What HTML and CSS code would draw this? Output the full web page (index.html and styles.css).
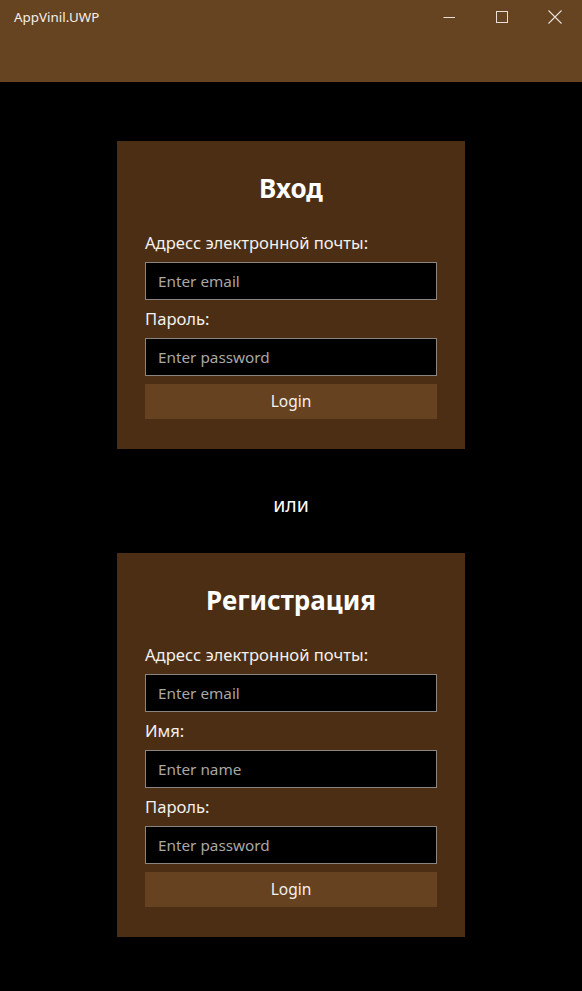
FILE: index.html
```html
<!DOCTYPE html>
<html lang="ru">
<head>
<meta charset="utf-8">
<title>AppVinil.UWP</title>
<link rel="stylesheet" href="styles.css">
</head>
<body>
<header class="titlebar">
  <div class="app-title">AppVinil.UWP</div>
  <div class="caption-buttons">
    <div class="cap-btn">
      <svg width="12" height="12" viewBox="0 0 12 12"><path d="M0.5 6.5h12" stroke="#e8e0d8" stroke-width="1" fill="none"/></svg>
    </div>
    <div class="cap-btn">
      <svg width="12" height="12" viewBox="0 0 12 12"><rect x="0.5" y="0.5" width="11" height="11" stroke="#e8e0d8" stroke-width="1" fill="none"/></svg>
    </div>
    <div class="cap-btn">
      <svg width="14" height="14" viewBox="0 0 14 14"><path d="M0.5 0.5L13.5 13.5M13.5 0.5L0.5 13.5" stroke="#e8e0d8" stroke-width="1.1" fill="none"/></svg>
    </div>
  </div>
</header>
<main class="content">
  <section class="card">
    <h1 class="card-title">Вход</h1>
    <label class="field-label">Адресс электронной почты:</label>
    <input class="field" type="text" placeholder="Enter email">
    <label class="field-label spaced">Пароль:</label>
    <input class="field" type="password" placeholder="Enter password">
    <button class="btn">Login</button>
  </section>
  <div class="or">или</div>
  <section class="card">
    <h1 class="card-title">Регистрация</h1>
    <label class="field-label">Адресс электронной почты:</label>
    <input class="field" type="text" placeholder="Enter email">
    <label class="field-label spaced">Имя:</label>
    <input class="field" type="text" placeholder="Enter name">
    <label class="field-label spaced">Пароль:</label>
    <input class="field" type="password" placeholder="Enter password">
    <button class="btn">Login</button>
  </section>
</main>
</body>
</html>
```
FILE: styles.css
```css
* { box-sizing: border-box; }
html, body { margin: 0; padding: 0; }
body {
  background: #000;
  color: #fff;
  font-family: "Segoe UI", "Noto Sans", "Open Sans", sans-serif;
  width: 582px;
  height: 991px;
  overflow: hidden;
}
.titlebar {
  height: 82px;
  background: #664321;
  display: flex;
  align-items: flex-start;
  justify-content: space-between;
}
.app-title {
  font-size: 13.4px;
  line-height: 34px;
  padding-left: 14px;
  color: #f4efe9;
}
.caption-buttons {
  display: flex;
  padding-right: 1px;
}
.cap-btn {
  width: 53px;
  height: 33px;
  display: flex;
  align-items: center;
  justify-content: center;
}
.content {
  display: flex;
  flex-direction: column;
  align-items: center;
  padding-top: 59px;
}
.card {
  width: 348px;
  background: #4b2e14;
  padding: 30px 28px 30px;
  display: flex;
  flex-direction: column;
}
.card-title {
  margin: 0 0 27px;
  font-size: 26px;
  line-height: 34px;
  font-weight: 700;
  text-align: center;
  color: #fff;
}
.field-label {
  font-size: 16.6px;
  line-height: 22px;
  margin-bottom: 8px;
  color: #f3f0ec;
}
.field-label.spaced { margin-top: 8px; }
.field {
  height: 38px;
  width: 100%;
  background: #000;
  border: 1px solid #8a8580;
  padding: 0 12px 1px;
  font-family: inherit;
  font-size: 15.3px;
  color: #fff;
  outline: none;
}
.field::placeholder { color: #aaa7a4; }
.btn {
  margin-top: 8px;
  height: 35px;
  width: 100%;
  background: #664220;
  border: none;
  font-family: inherit;
  font-size: 15.5px;
  color: #f5f1ec;
  padding: 0 0 1px;
}
.or {
  margin: 43px 0 35px;
  font-size: 19.5px;
  line-height: 26px;
  color: #fff;
}
```
